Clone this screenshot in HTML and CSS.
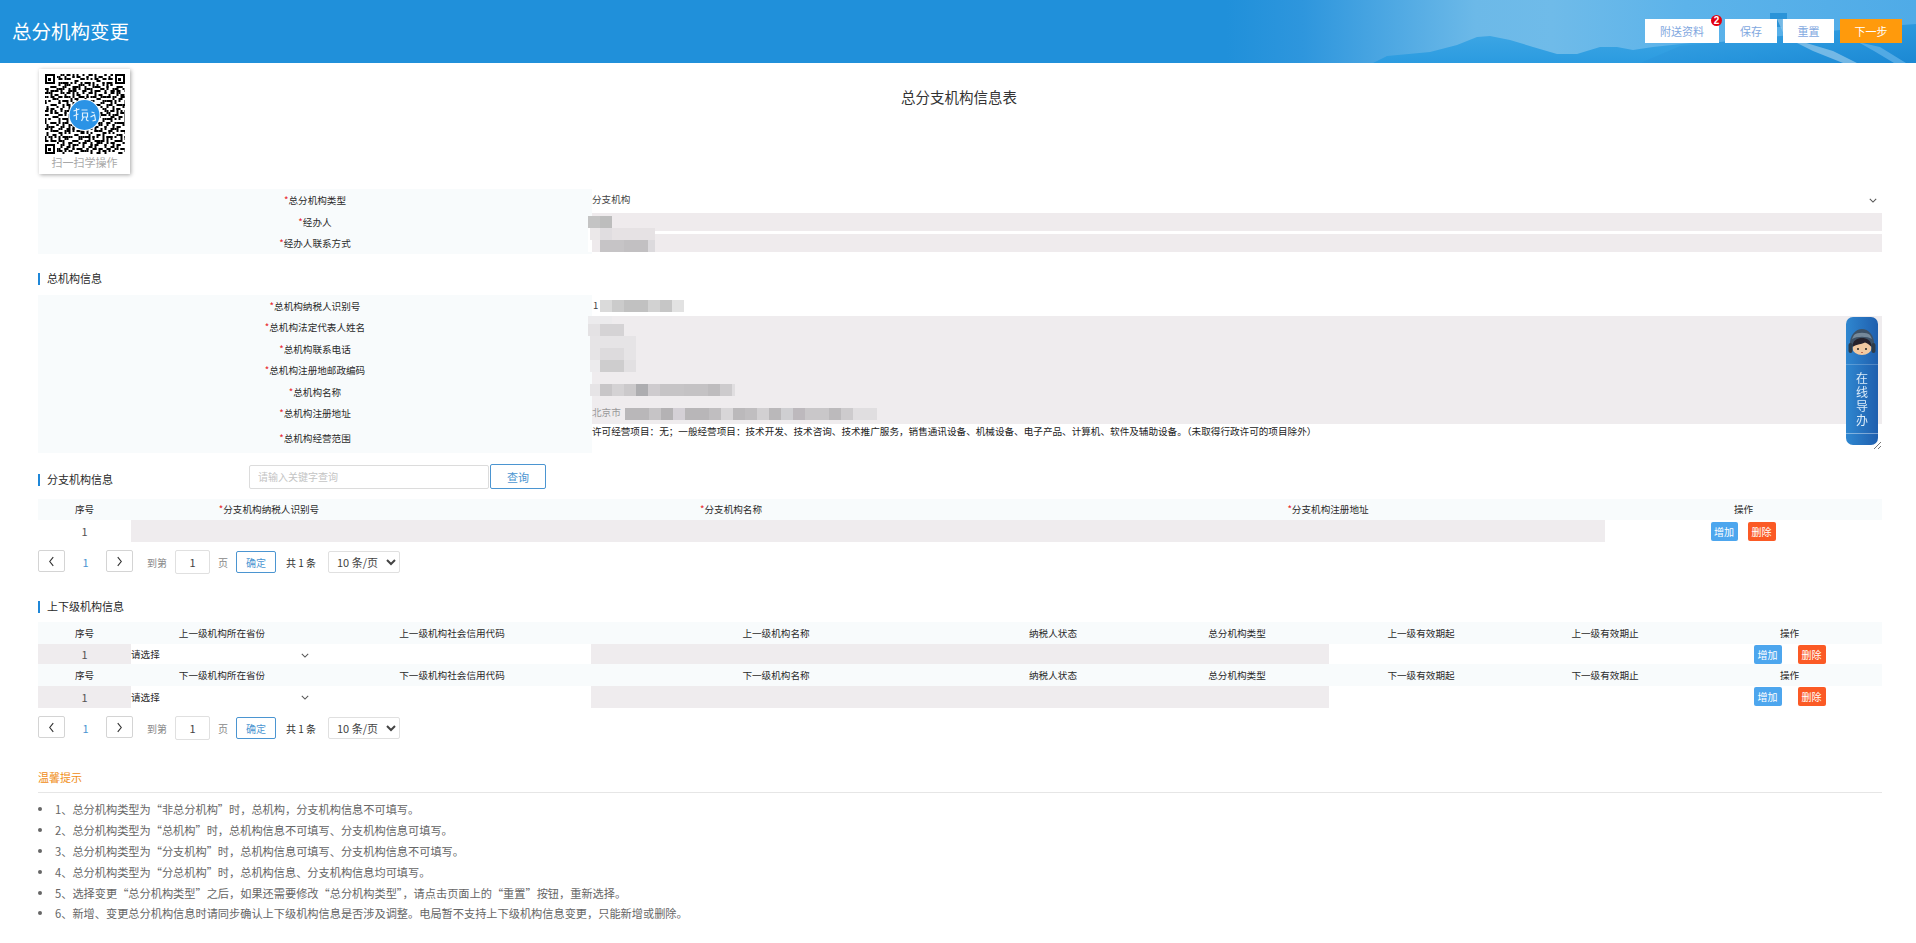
FILE: index.html
```html
<!DOCTYPE html>
<html lang="zh-CN">
<head>
<meta charset="utf-8">
<title>总分机构变更</title>
<link rel="stylesheet" href="styles.css">
</head>
<body>
<header class="topbar">
  <svg class="topbar-art" viewBox="0 0 1916 63" preserveAspectRatio="none" aria-hidden="true">
    <defs>
      <linearGradient id="sky" x1="0" x2="1" y1="0" y2="0">
        <stop offset="0" stop-color="#2090da"/>
        <stop offset=".64" stop-color="#2090da"/>
        <stop offset=".68" stop-color="#2e96dd"/>
        <stop offset=".77" stop-color="#6cb9e8"/>
        <stop offset=".81" stop-color="#6fbbe9"/>
        <stop offset=".88" stop-color="#5cb3ea"/>
        <stop offset="1" stop-color="#4fabe7"/>
      </linearGradient>
      <linearGradient id="land" x1="0" x2="0" y1="0" y2="1">
        <stop offset="0" stop-color="#3ba5e4"/>
        <stop offset="1" stop-color="#2b9be0"/>
      </linearGradient>
      <linearGradient id="sea" x1="0" x2="1" y1="0" y2="1">
        <stop offset="0" stop-color="#3ea5e4"/>
        <stop offset=".6" stop-color="#2795dc"/>
        <stop offset="1" stop-color="#1b88d3"/>
      </linearGradient>
    </defs>
    <rect width="1916" height="63" fill="url(#sky)"/>
    <path d="M1373 63L1387 56 1430 52 1457 45 1477 37 1490 36 1510 40 1533 47 1557 54 1577 54 1600 47 1617 47 1633 50 1653 47 1700 42 1916 42V63Z" fill="url(#land)"/>
    <path d="M1640 63L1680 46 1760 38 1860 28 1916 24V63Z" fill="url(#sea)"/>
    <path d="M1770 13h17v6h-5v8h-6v-8h-6z" fill="#2a93d8"/>
    <path d="M1777 19l6 0 10 20 40 12 24 12h-14l-30-12-28-14z" fill="#8fc6ea" opacity=".75"/>
    <path d="M1858 42l22 5 26 16h-12l-20-12z" fill="#66b5ea" opacity=".7"/>
  </svg>
  <h1 class="topbar-title">总分机构变更</h1>
  <div class="topbar-actions">
    <button class="hbtn hbtn-attach" type="button">附送资料<span class="badge">2</span></button>
    <button class="hbtn hbtn-save" type="button">保存</button>
    <button class="hbtn hbtn-reset" type="button">重置</button>
    <button class="hbtn hbtn-next" type="button">下一步</button>
  </div>
</header>

<main class="page">
  <div class="intro">
    <div class="qr-card">
      <svg class="qr" viewBox="0 0 80 80" shape-rendering="crispEdges" aria-hidden="true">
        <defs>
          <pattern id="qa" width="22" height="18" patternUnits="userSpaceOnUse">
            <path d="M0 0h4v2H0zM6 0h2v4H6zM10 2h4v2h-4zM16 0h2v2h-2zM20 2h2v4h-2zM2 4h2v2H2zM8 6h4v2H8zM14 4h4v2h-4zM0 8h2v4H0zM4 8h2v2H4zM14 8h2v4h-2zM18 8h4v2h-4zM6 12h6v2H6zM2 14h2v4H2zM12 14h2v2h-2zM18 12h2v4h-2zM6 16h4v2H6zM16 16h2v2h-2z"/>
          </pattern>
          <pattern id="qb" width="14" height="26" patternUnits="userSpaceOnUse">
            <path d="M0 2h2v2H0zM4 0h2v2H4zM8 4h4v2H8zM2 8h2v2H2zM6 10h2v4H6zM10 10h2v2h-2zM0 14h4v2H0zM10 16h4v2h-4zM4 18h2v2H4zM0 22h2v2H0zM6 22h4v2H6zM12 24h2v2h-2z"/>
          </pattern>
        </defs>
        <rect width="80" height="80" fill="#fff"/>
        <rect width="80" height="80" fill="url(#qa)"/>
        <rect width="80" height="80" fill="url(#qb)"/>
        <g>
          <path d="M0 0h12v12H0zM68 0h12v12H68zM0 68h12v12H0z" fill="#fff"/>
          <path d="M0 0h10v10H0zM2 2v6h6V2zM70 0h10v10H70zM72 2v6h6V2zM0 70h10v10H0zM2 72v6h6v-6z" fill-rule="evenodd"/>
          <path d="M3.500 3.500h3v3h-3zM73.500 3.500h3v3h-3zM3.500 73.500h3v3h-3z"/>
        </g>
        <circle cx="40" cy="41" r="16" fill="#fff" shape-rendering="auto"/>
        <circle cx="40" cy="41" r="15" fill="#2b93e6" shape-rendering="auto"/>
        <path d="M29 37l6-2M32 34v12M29 42l5-2M37 36h6M38 39h5v4h-5zM39 43l-2 4M42 43v3l2 1M47 38l3 1M46 43l4-2 1 5-3 1" fill="none" stroke="#dff0fc" stroke-width="1.200" shape-rendering="auto"/>
      </svg>
      <div class="qr-caption">扫一扫学操作</div>
    </div>
    <h2 class="sheet-title">总分支机构信息表</h2>
  </div>

  <section class="form form-basic">
    <div class="frow frow-a"><div class="flabel"><i>*</i>总分机构类型</div><div class="fvalue fselect">分支机构<svg class="chev" viewBox="0 0 10 6" aria-hidden="true"><path d="M1 1l4 4 4-4" fill="none" stroke="#555" stroke-width="1.300"/></svg></div></div>
    <div class="frow frow-b"><div class="flabel"><i>*</i>经办人</div><div class="fvalue"><div class="finput"></div></div></div>
    <div class="frow frow-a"><div class="flabel"><i>*</i>经办人联系方式</div><div class="fvalue"><div class="finput"></div></div></div>
    <svg class="mosaic mosaic-basic" viewBox="585 205 100 50" shape-rendering="crispEdges" aria-hidden="true">
      <rect x="585" y="205" width="100" height="50" fill="none"/>
      <path d="M588 228h5v24h-5z" fill="#fff"/>
      <rect x="588" y="216" width="12" height="12" fill="#c4c4c4"/><rect x="600" y="216" width="12" height="12" fill="#bdbdbd"/>
      <rect x="590" y="228" width="10" height="12" fill="#ebe8e9"/><rect x="600" y="228" width="12" height="12" fill="#e0dde0"/><rect x="612" y="228" width="43" height="12" fill="#e6e2e4"/>
      <rect x="592" y="240" width="8" height="12" fill="#eeeaec"/><rect x="600" y="240" width="24" height="12" fill="#c6c4c6"/><rect x="624" y="240" width="24" height="12" fill="#c2c0c2"/><rect x="648" y="240" width="7" height="12" fill="#dcdadd"/>
    </svg>
  </section>

  <div class="section-head section-head-hq"><span class="section-title">总机构信息</span></div>
  <section class="form form-hq">
    <div class="frow frow-c"><div class="flabel"><i>*</i>总机构纳税人识别号</div><div class="fvalue fplain">1</div></div>
    <div class="frow frow-d"><div class="flabel"><i>*</i>总机构法定代表人姓名</div><div class="fvalue fgrey"></div></div>
    <div class="frow frow-c"><div class="flabel"><i>*</i>总机构联系电话</div><div class="fvalue fgrey"></div></div>
    <div class="frow frow-d"><div class="flabel"><i>*</i>总机构注册地邮政编码</div><div class="fvalue fgrey"></div></div>
    <div class="frow frow-c"><div class="flabel"><i>*</i>总机构名称</div><div class="fvalue fgrey"></div></div>
    <div class="frow frow-d"><div class="flabel"><i>*</i>总机构注册地址</div><div class="fvalue fgrey">北京市</div></div>
    <div class="frow frow-e"><div class="flabel"><i>*</i>总机构经营范围</div><div class="fvalue farea">许可经营项目：无；一般经营项目：技术开发、技术咨询、技术推广服务，销售通讯设备、机械设备、电子产品、计算机、软件及辅助设备。（未取得行政许可的项目除外）<svg class="grip" viewBox="0 0 9 9" aria-hidden="true"><path d="M1 8l7-7M5 8l3-3" stroke="#555" stroke-width=".8"/></svg></div></div>
    <svg class="mosaic mosaic-hq" viewBox="585 295 320 140" shape-rendering="crispEdges" aria-hidden="true">
      <path d="M600 300h12v12h-12z" fill="#dadada"/><path d="M612 300h12v12h-12z" fill="#cbcbcb"/><path d="M624 300h24v12h-24z" fill="#c1c1c1"/><path d="M648 300h12v12h-12z" fill="#d2d2d2"/><path d="M660 300h12v12h-12z" fill="#c6c6c6"/><path d="M672 300h12v12h-12z" fill="#e2e2e2"/>
      <path d="M592 312h102v4H592zM592 316h8v8h-8z" fill="#fff"/>
      <path d="M588 316h24v8h-24z" fill="#ecebed"/>
      <path d="M588 324h12v12h-12z" fill="#e4e2e4"/><path d="M600 324h24v12h-24z" fill="#d5d3d5"/>
      <path d="M590 336h46v24h-46z" fill="#e6e4e6"/><path d="M600 348h24v12h-24z" fill="#dddbdd"/>
      <path d="M590 360h10v12h-10z" fill="#ecebed"/><path d="M600 360h24v12h-24z" fill="#cecdce"/><path d="M624 360h12v12h-12z" fill="#e2e0e2"/>
      <path d="M590 384h10v12h-10z" fill="#e6e4e6"/><path d="M600 384h12v12h-12z" fill="#c8c6c8"/><path d="M612 384h12v12h-12z" fill="#d4d2d4"/><path d="M624 384h12v12h-12z" fill="#cbc9cb"/><path d="M636 384h12v12h-12z" fill="#adadb0"/><path d="M648 384h12v12h-12z" fill="#cecbce"/><path d="M660 384h24v12h-24z" fill="#c6c4c6"/><path d="M684 384h24v12h-24z" fill="#c4c2c4"/><path d="M708 384h12v12h-12z" fill="#bebcbe"/><path d="M720 384h12v12h-12z" fill="#cdcbcd"/><path d="M732 384h3v12h-3z" fill="#e0dee0"/>
      <path d="M625 408h24v12h-24z" fill="#b9b7b9"/><path d="M649 408h12v12h-12z" fill="#c6c4c6"/><path d="M661 408h12v12h-12z" fill="#b4b2b4"/><path d="M673 408h12v12h-12z" fill="#d4d0d6"/><path d="M685 408h24v12h-24z" fill="#b8b6b8"/><path d="M709 408h12v12h-12z" fill="#c0bec0"/><path d="M721 408h12v12h-12z" fill="#d8d6d8"/><path d="M733 408h12v12h-12z" fill="#bbb9bb"/><path d="M745 408h12v12h-12z" fill="#c0bec0"/><path d="M757 408h12v12h-12z" fill="#d2d0d2"/><path d="M769 408h12v12h-12z" fill="#bab8ba"/><path d="M781 408h12v12h-12z" fill="#cfcfd2"/><path d="M793 408h12v12h-12z" fill="#bdb9bd"/><path d="M805 408h24v12h-24z" fill="#c9c7c9"/><path d="M829 408h12v12h-12z" fill="#bcbabc"/><path d="M841 408h12v12h-12z" fill="#cdcbcd"/><path d="M853 408h24v12h-24z" fill="#e0dee0"/>
    </svg>
  </section>

  <div class="branch-head">
    <span class="section-title section-title-wide">分支机构信息</span>
    <input class="search-input" type="text" placeholder="请输入关键字查询">
    <button class="search-btn" type="button">查询</button>
  </div>

  <section class="table branch-table">
    <div class="trow branch-headrow thead">
      <div>序号</div><div><i>*</i>分支机构纳税人识别号</div><div><i>*</i>分支机构名称</div><div class="branch-addr"><i>*</i>分支机构注册地址</div><div>操作</div>
    </div>
    <div class="trow branch-row">
      <div class="tnum">1</div><div class="tgrey"></div>
      <div class="tactions tactions-branch"><button class="mini mini-add" type="button">增加</button><button class="mini mini-del" type="button">删除</button></div>
    </div>
  </section>

  <nav class="pager">
    <button class="pg-arrow" type="button" aria-label="上一页"><svg viewBox="0 0 8 12"><path d="M6 1L2 6l4 5" fill="none" stroke="#333" stroke-width="1.300"/></svg></button>
    <span class="pg-cur">1</span>
    <button class="pg-arrow" type="button" aria-label="下一页"><svg viewBox="0 0 8 12"><path d="M2 1l4 5-4 5" fill="none" stroke="#333" stroke-width="1.300"/></svg></button>
    <span class="pg-to">到第</span>
    <input class="pg-input" type="text" value="1">
    <span class="pg-unit">页</span>
    <button class="pg-ok" type="button">确定</button>
    <span class="pg-total">共 1 条</span>
    <select class="pg-size"><option>10 条/页</option></select>
  </nav>

  <div class="section-head section-head-rel"><span class="section-title">上下级机构信息</span></div>
  <section class="table rel-table">
    <div class="trow rel-grid thead"><div>序号</div><div>上一级机构所在省份</div><div>上一级机构社会信用代码</div><div>上一级机构名称</div><div>纳税人状态</div><div>总分机构类型</div><div>上一级有效期起</div><div>上一级有效期止</div><div>操作</div></div>
    <div class="trow rel-grid rel-row rel-row-a"><div class="tgrey tnum">1</div><div class="tselect">请选择<svg class="chev" viewBox="0 0 10 6" aria-hidden="true"><path d="M1 1l4 4 4-4" fill="none" stroke="#555" stroke-width="1.300"/></svg></div><div></div><div class="tgrey"></div><div class="tgrey"></div><div class="tgrey"></div><div></div><div></div><div class="tactions tactions-rel"><button class="mini mini-add" type="button">增加</button><button class="mini mini-del" type="button">删除</button></div></div>
    <div class="trow rel-grid thead"><div>序号</div><div>下一级机构所在省份</div><div>下一级机构社会信用代码</div><div>下一级机构名称</div><div>纳税人状态</div><div>总分机构类型</div><div>下一级有效期起</div><div>下一级有效期止</div><div>操作</div></div>
    <div class="trow rel-grid rel-row"><div class="tgrey tnum">1</div><div class="tselect">请选择<svg class="chev" viewBox="0 0 10 6" aria-hidden="true"><path d="M1 1l4 4 4-4" fill="none" stroke="#555" stroke-width="1.300"/></svg></div><div></div><div class="tgrey"></div><div class="tgrey"></div><div class="tgrey"></div><div></div><div></div><div class="tactions tactions-rel"><button class="mini mini-add" type="button">增加</button><button class="mini mini-del" type="button">删除</button></div></div>
  </section>

  <nav class="pager">
    <button class="pg-arrow" type="button" aria-label="上一页"><svg viewBox="0 0 8 12"><path d="M6 1L2 6l4 5" fill="none" stroke="#333" stroke-width="1.300"/></svg></button>
    <span class="pg-cur">1</span>
    <button class="pg-arrow" type="button" aria-label="下一页"><svg viewBox="0 0 8 12"><path d="M2 1l4 5-4 5" fill="none" stroke="#333" stroke-width="1.300"/></svg></button>
    <span class="pg-to">到第</span>
    <input class="pg-input" type="text" value="1">
    <span class="pg-unit">页</span>
    <button class="pg-ok" type="button">确定</button>
    <span class="pg-total">共 1 条</span>
    <select class="pg-size"><option>10 条/页</option></select>
  </nav>

  <section class="tips">
    <h3 class="tips-title">温馨提示</h3>
    <ul class="tips-list">
      <li>1、总分机构类型为“非总分机构”时，总机构，分支机构信息不可填写。</li>
      <li>2、总分机构类型为“总机构”时，总机构信息不可填写、分支机构信息可填写。</li>
      <li>3、总分机构类型为“分支机构”时，总机构信息可填写、分支机构信息不可填写。</li>
      <li>4、总分机构类型为“分总机构”时，总机构信息、分支机构信息均可填写。</li>
      <li>5、选择变更“总分机构类型”之后，如果还需要修改“总分机构类型”，请点击页面上的“重置”按钮，重新选择。</li>
      <li>6、新增、变更总分机构信息时请同步确认上下级机构信息是否涉及调整。电局暂不支持上下级机构信息变更，只能新增或删除。</li>
    </ul>
  </section>
</main>

<aside class="guide">
  <svg class="guide-avatar" viewBox="0 0 32 32" aria-hidden="true">
    <path d="M4 19C3 8 10 2 16 2s13 6 12 17" fill="#3e5266"/>
    <path d="M8 8c3-3 13-3 16 0l2 4c-5-3-15-3-20 0z" fill="#75899a"/>
    <ellipse cx="16" cy="21" rx="9.500" ry="7" fill="#f1c9a0"/>
    <path d="M6.500 20c0-7 5-9 9.500-9s9.500 2 9.500 9c-2-2-4-4-6.500-4.500-3 1.800-8 1.500-12.500 4.500z" fill="#26222b"/>
    <rect x="2.500" y="16" width="4" height="10" rx="2" fill="#2f3c48"/>
    <rect x="25.500" y="16" width="4" height="10" rx="2" fill="#2f3c48"/>
    <circle cx="12" cy="22" r="1" fill="#222"/><circle cx="20" cy="22" r="1" fill="#222"/>
    <path d="M15 25.500h2" stroke="#b5533d" stroke-width=".8"/>
  </svg>
  <div class="guide-text">在<br>线<br>导<br>办</div>
</aside>
</body>
</html>
```
FILE: styles.css
```css
* { box-sizing: border-box; }
html, body { margin: 0; padding: 0; background: #fff; }
body {
  font-family: "Noto Sans CJK SC", "Liberation Sans", sans-serif;
  font-size: 9.600px;
  color: #2a2a2a;
  overflow-x: hidden;
}
i { font-style: normal; color: #e8262c; }
button, input, select { font-family: inherit; }

.topbar {
  position: relative;
  height: 63px;
  display: flex;
  align-items: flex-start;
  overflow: hidden;
  background: #2090da;
}
.topbar-art { position: absolute; left: 0; top: 0; width: 100%; height: 100%; }
.topbar-title {
  position: relative;
  margin: 18px 0 0 12px;
  font-size: 19.500px;
  line-height: 26px;
  font-weight: 400;
  color: #fff;
}
.topbar-actions {
  position: relative;
  margin: 19px 14px 0 auto;
  display: flex;
  gap: 6px;
}
.hbtn {
  position: relative;
  height: 24px;
  border: 0;
  padding: 0;
  background: #fff;
  color: #7fa8e0;
  font-size: 11px;
  line-height: 24px;
}
.hbtn-attach { width: 74px; }
.hbtn-save { width: 52px; }
.hbtn-reset { width: 51px; }
.hbtn-next { width: 62px; background: #ff9a0c; color: #fff; }
.badge {
  position: absolute;
  right: -3px;
  top: -4px;
  width: 11px;
  height: 11px;
  border-radius: 50%;
  background: #e3000f;
  color: #fff;
  font-family: "Liberation Sans", sans-serif;
  font-size: 10px;
  line-height: 11px;
  font-weight: 700;
  text-align: center;
}

.page { width: 1844px; margin-left: 38px; position: relative; }

.intro { display: grid; grid-template-columns: 1fr auto 1fr; height: 126px; }
.qr-card {
  margin: 6px 0 0 1px;
  width: 91px;
  height: 105px;
  padding: 5px 5px 0;
  background: #fff;
  box-shadow: 1px 1px 4px rgba(0, 0, 0, .35);
}
.qr { display: block; width: 81px; height: 80px; }
.qr-caption { text-align: center; font-size: 11px; line-height: 16px; color: #a8a8a8; white-space: nowrap; }
.sheet-title {
  margin: 25px 0 0;
  font-size: 14.500px;
  line-height: 18px;
  font-weight: 400;
  color: #333;
  position: relative;
  left: -1px;
}

.form { position: relative; }
.frow { display: grid; grid-template-columns: 554px 1fr; }
.frow-a { height: 22px; }
.frow-b { height: 21px; }
.frow-c { height: 21px; }
.frow-d { height: 22px; }
.frow-e { height: 29px; }
.flabel {
  background: #f8fbfc;
  text-align: center;
  line-height: 22px;
  color: #2a2a2a;
}
.frow-e .flabel { line-height: 29px; }
.fvalue { position: relative; line-height: 21px; color: #444; }
.fselect .chev { position: absolute; right: 5px; top: 9px; }
.chev { width: 8px; height: 5px; }
.finput { height: 18px; margin-top: 2px; background: #efebed; }
.fgrey { background: #efecee; color: #999; }
.fplain { padding-left: 1px; }
.farea { line-height: 14px; color: #222; }
.grip { position: absolute; right: 0; bottom: 3px; width: 9px; height: 9px; }
.mosaic { position: absolute; display: block; pointer-events: none; }
.mosaic-basic { left: 547px; top: 16px; width: 100px; height: 50px; }
.mosaic-hq { left: 547px; top: 0; width: 320px; height: 140px; }

.section-head { height: 12px; display: flex; align-items: center; }
.section-head-hq { margin: 19px 0 10px; }
.section-head-rel { margin: 27px 0 9px; }
.section-title {
  display: block;
  height: 12px;
  padding-left: 7px;
  border-left: 2px solid #1f87d8;
  font-size: 11px;
  line-height: 11px;
  color: #2a2a2a;
}
.section-title-wide { width: 211px; margin-top: 6px; }

.branch-head { display: flex; align-items: center; height: 25px; margin-top: 11px; }
.search-input {
  width: 240px;
  height: 24px;
  padding: 0 8px;
  border: 1px solid #dcdcdc;
  border-radius: 2px;
  font-size: 10px;
  outline: 0;
}
.search-input::placeholder { color: #c4c4c4; }
.search-btn {
  width: 56px;
  height: 25px;
  margin-left: 1px;
  padding: 0;
  background: #fff;
  border: 1px solid #4b95d1;
  border-radius: 2px;
  color: #4b95d1;
  font-size: 11px;
}

.branch-table { margin-top: 10px; }
.trow { display: grid; text-align: center; }
.thead { background: #f8fbfc; height: 22px; line-height: 22px; color: #2a2a2a; }
.branch-headrow { grid-template-columns: 93px 276px 648px 550px 277px; height: 21px; line-height: 21px; }
.branch-addr { padding-right: 4px; }
.branch-row { grid-template-columns: 93px 1474px 277px; height: 22px; line-height: 22px; }
.tnum { color: #555; font-size: 11px; }
.tgrey { background: #efecee; }
.tactions { display: flex; gap: 10px; justify-content: center; }
.tactions-branch { padding: 2px 0 0 0; margin-left: -1px; }
.mini {
  height: 19px;
  border: 0;
  padding: 0;
  border-radius: 2px;
  color: #fff;
  font-size: 10px;
  line-height: 19px;
}
.tactions-branch .mini-add { width: 27px; }
.tactions-branch .mini-del { width: 28px; }
.tactions-rel { gap: 16px; padding-top: 1px; }
.tactions-rel .mini { width: 28px; }
.mini-add { background: #4da6ee; }
.mini-del { background: #fb5a25; }

.rel-grid { grid-template-columns: 93px 182px 278px 370px 184px 184px 184px 184px 185px; }
.rel-row { height: 22px; line-height: 22px; }
.rel-row-a { height: 20px; line-height: 20px; }
.tselect { position: relative; text-align: left; color: #2a2a2a; }
.tselect .chev { position: absolute; left: 170px; top: 9px; }

.pager { display: flex; align-items: flex-start; height: 24px; margin-top: 8px; color: #888; font-size: 10px; }
.pg-arrow {
  width: 27px;
  height: 22px;
  padding: 0;
  background: #fff;
  border: 1px solid #d4d4d4;
  border-radius: 2px;
  display: flex;
  align-items: center;
  justify-content: center;
}
.pg-arrow svg { width: 7px; height: 11px; }
.pg-cur { width: 41px; text-align: center; font-size: 11px; line-height: 24px; color: #4b95d1; }
.pg-to { width: 42px; padding-left: 14px; line-height: 26px; }
.pg-input {
  width: 35px;
  height: 24px;
  padding: 0;
  border: 1px solid #e0e0e0;
  border-radius: 2px;
  text-align: center;
  font-size: 11px;
  color: #444;
}
.pg-unit { width: 26px; text-align: center; line-height: 26px; }
.pg-ok {
  width: 40px;
  height: 22px;
  margin-top: 1px;
  padding: 0;
  background: #fff;
  border: 1px solid #4b95d1;
  border-radius: 2px;
  color: #4b95d1;
  font-size: 10px;
}
.pg-total { width: 52px; padding-left: 10px; line-height: 26px; color: #333; }
.pg-size {
  width: 72px;
  height: 22px;
  margin-top: 1px;
  padding: 0 0 0 4px;
  background: #fff;
  border: 1px solid #e0e0e0;
  border-radius: 2px;
  font-size: 11px;
  color: #444;
}

.tips { margin-top: 30px; }
.tips-title {
  margin: 0;
  padding-bottom: 8px;
  border-bottom: 1px solid #e6e6e6;
  font-size: 11px;
  line-height: 14px;
  font-weight: 400;
  color: #f08c14;
}
.tips-list { list-style: none; margin: 6px 0 0; padding: 0; }
.tips-list li {
  display: flex;
  align-items: center;
  gap: 13px;
  height: 20.800px;
  font-size: 11.200px;
  color: #666;
}
.tips-list li::before {
  content: "";
  width: 4px;
  height: 4px;
  border-radius: 50%;
  background: #666;
}

.guide {
  position: fixed;
  left: 1846px;
  top: 317px;
  width: 32px;
  height: 128px;
  border-radius: 7px;
  background: linear-gradient(90deg, #2f87d0, #1f5fae);
  overflow: hidden;
  display: flex;
  flex-direction: column;
  align-items: center;
}
.guide-avatar { width: 32px; height: 32px; margin-top: 10px; flex: none; }
.guide-text {
  width: 100%;
  margin-top: 5px;
  height: 70px;
  border-top: 1px solid rgba(255, 255, 255, .22);
  border-bottom: 1px solid rgba(255, 255, 255, .4);
  padding-top: 6px;
  text-align: center;
  color: #dcecf9;
  font-size: 12px;
  line-height: 14px;
}
```
